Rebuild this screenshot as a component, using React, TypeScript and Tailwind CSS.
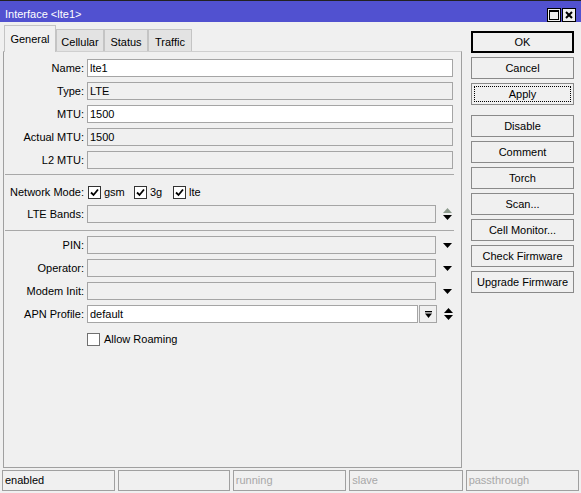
import type { ReactNode } from 'react'

const font = { fontFamily: '"Liberation Sans", Arial, sans-serif' }

function DownArrow({ gray }: { gray?: boolean }) {
  return (
    <svg width="9" height="5" viewBox="0 0 9 5">
      <polygon points="0,0 9,0 4.5,5" fill={gray ? '#8c8c8c' : '#000'} />
    </svg>
  )
}

function UpArrow({ gray }: { gray?: boolean }) {
  return (
    <svg width="9" height="5" viewBox="0 0 9 5">
      <polygon points="0,5 9,5 4.5,0" fill={gray ? '#8c9a8c' : '#000'} />
    </svg>
  )
}

function Label({ children }: { children: ReactNode }) {
  return <div className="w-[80px] shrink-0 text-right leading-[18px] whitespace-nowrap">{children}</div>
}

function Input({ value, white, w }: { value?: string; white?: boolean; w: string }) {
  return (
    <div
      className={`${w} h-[18px] border border-[#a5a5a5] pl-[2px] leading-[16px] ${white ? 'bg-white' : 'bg-[#f0f0f0]'}`}
    >
      {value}
    </div>
  )
}

function Field({ label, value, white, className = '' }: { label: string; value?: string; white?: boolean; className?: string }) {
  return (
    <div className={`flex items-center gap-[3px] ${className}`}>
      <Label>{label}</Label>
      <Input value={value} white={white} w="w-[366px]" />
    </div>
  )
}

function Dropdown({ label, value, white, className = '', extra }: { label: string; value?: string; white?: boolean; className?: string; extra?: ReactNode }) {
  return (
    <div className={`flex items-center gap-[3px] ${className}`}>
      <Label>{label}</Label>
      <Input value={value} white={white} w="w-[349px]" />
      <div className="ml-[3px] flex w-[11px] justify-center">{extra ?? <DownArrow />}</div>
    </div>
  )
}

function Check({ on, dark }: { on?: boolean; dark?: boolean }) {
  return (
    <div className={`flex h-[13px] w-[13px] items-center justify-center border bg-white ${dark ? 'border-[#333]' : 'border-[#707070]'}`}>
      {on && (
        <svg width="9" height="9" viewBox="0 0 9 9">
          <path d="M1 4.5 L3.5 7 L8 1.5" fill="none" stroke="#000" strokeWidth="1.8" />
        </svg>
      )}
    </div>
  )
}

function Btn({ children, className = '', ok, focus }: { children: ReactNode; className?: string; ok?: boolean; focus?: boolean }) {
  return (
    <div
      className={`relative flex h-[22px] w-[103px] items-center justify-center bg-[#f0f0f0] ${
        ok ? 'border border-black shadow-[inset_0_0_0_1px_#000]' : 'border border-[#8a8a8a]'
      } ${className}`}
    >
      {focus && <span className="absolute inset-[2px] border border-dotted border-black" />}
      <span className="relative">{children}</span>
    </div>
  )
}

function Tab({ children, active, w }: { children: ReactNode; active?: boolean; w: string }) {
  return (
    <div
      className={`${w} flex justify-center border border-[#c4c4c4] ${
        active
          ? 'relative z-10 -mb-px h-[27px] border-b-0 bg-[#f0f0f0] pt-[5px]'
          : 'h-[22px] border-b-0 bg-[#e3e3e3] pt-[4px]'
      }`}
    >
      {children}
    </div>
  )
}

export default function App() {
  return (
    <div className="flex h-[493px] w-[581px] flex-col overflow-hidden bg-[#f0f0f0] text-[11px] text-black" style={font}>
      <div className="flex h-[22px] shrink-0 items-start border-t border-[#222] bg-[#5151d0] pl-[5px] pr-[5px] pt-[7px] text-[11px] leading-[12px] text-white">
        <span className="flex-1">Interface &lt;lte1&gt;</span>
        <div className="flex gap-[1px]">
          <div className="flex h-[14px] w-[14px] items-center justify-center border border-black bg-[#f0f0f0]">
            <svg width="10" height="10" viewBox="0 0 10 10">
              <rect x="0.5" y="0.5" width="9" height="9" fill="none" stroke="#000" />
              <line x1="0" y1="1.5" x2="10" y2="1.5" stroke="#000" />
            </svg>
          </div>
          <div className="flex h-[14px] w-[14px] items-center justify-center border border-black bg-[#f0f0f0]">
            <svg width="8" height="8" viewBox="0 0 8 8">
              <path d="M1 1 L7 7 M7 1 L1 7" stroke="#000" strokeWidth="2" />
            </svg>
          </div>
        </div>
      </div>

      <div className="flex flex-1">
        <div className="flex w-[462px] flex-col pb-[1px] pl-[3px] pt-[3px]">
          <div className="flex h-[26px] items-end pl-[1px]">
            <Tab active w="w-[52px]">General</Tab>
            <Tab w="w-[48px]">Cellular</Tab>
            <Tab w="w-[44px]">Status</Tab>
            <Tab w="w-[44px]">Traffic</Tab>
          </div>
          <div className="flex flex-1 flex-col border border-[#a0a0a0] border-t-[#cfcfcf] pt-[7px]">
            <Field label="Name:" value="lte1" white />
            <Field label="Type:" value="LTE" className="mt-[5px]" />
            <Field label="MTU:" value="1500" white className="mt-[5px]" />
            <Field label="Actual MTU:" value="1500" className="mt-[5px]" />
            <Field label="L2 MTU:" className="mt-[5px]" />
            <div className="ml-[1px] mt-[5px] h-px w-[449px] bg-[#a8a8a8]" />
            <div className="mt-[8px] flex h-[18px] items-center gap-[3px]">
              <Label>Network Mode:</Label>
              <div className="ml-[1px] flex items-center">
                <Check on dark />
                <span className="ml-[3px] w-[30px]">gsm</span>
                <Check on dark />
                <span className="ml-[3px] w-[23px]">3g</span>
                <Check on dark />
                <span className="ml-[3px]">lte</span>
              </div>
            </div>
            <Dropdown
              label="LTE Bands:"
              className="mt-[4px]"
              extra={
                <div className="flex flex-col gap-[2px]">
                  <UpArrow gray />
                  <DownArrow />
                </div>
              }
            />
            <div className="ml-[1px] mt-[7px] h-px w-[449px] bg-[#a8a8a8]" />
            <Dropdown label="PIN:" className="mt-[5px]" />
            <Dropdown label="Operator:" className="mt-[5px]" />
            <Dropdown label="Modem Init:" className="mt-[5px]" />
            <div className="mt-[5px] flex items-center gap-[3px]">
              <Label>APN Profile:</Label>
              <Input value="default" white w="w-[331px]" />
              <div className="-ml-[2px] flex h-[18px] w-[18px] items-center justify-center border border-[#a5a5a5] bg-[#f0f0f0]">
                <svg width="7" height="7" viewBox="0 0 7 7">
                  <rect x="0" y="0" width="7" height="1.3" fill="#000" />
                  <polygon points="0,2.5 7,2.5 3.5,7" fill="#000" />
                </svg>
              </div>
              <div className="ml-[3px] flex w-[11px] flex-col items-center gap-[2px]">
                <UpArrow />
                <DownArrow />
              </div>
            </div>
            <div className="mt-[7px] flex h-[18px] items-center">
              <div className="w-[83px]" />
              <Check />
              <span className="ml-[4px]">Allow Roaming</span>
            </div>
          </div>
        </div>

        <div className="flex flex-col pl-[9px] pt-[9px]">
          <Btn ok>OK</Btn>
          <Btn className="mt-[4px]">Cancel</Btn>
          <Btn className="mt-[4px]" focus>Apply</Btn>
          <Btn className="mt-[10px]">Disable</Btn>
          <Btn className="mt-[4px]">Comment</Btn>
          <Btn className="mt-[4px]">Torch</Btn>
          <Btn className="mt-[4px]">Scan...</Btn>
          <Btn className="mt-[4px]">Cell Monitor...</Btn>
          <Btn className="mt-[4px]">Check Firmware</Btn>
          <Btn className="mt-[4px]">Upgrade Firmware</Btn>
        </div>
      </div>

      <div className="flex h-[24px] shrink-0 gap-[3px] px-[2px] pb-[2px] pt-[1px]">
        <div className="flex-1 border border-[#a0a0a0] pl-[2px] leading-[19px]">enabled</div>
        <div className="flex-1 border border-[#a0a0a0]" />
        <div className="flex-1 border border-[#a0a0a0] pl-[2px] leading-[19px] text-[#a8a8a8]">running</div>
        <div className="flex-1 border border-[#a0a0a0] pl-[2px] leading-[19px] text-[#a8a8a8]">slave</div>
        <div className="flex-1 border border-[#a0a0a0] pl-[2px] leading-[19px] text-[#a8a8a8]">passthrough</div>
      </div>
    </div>
  )
}
